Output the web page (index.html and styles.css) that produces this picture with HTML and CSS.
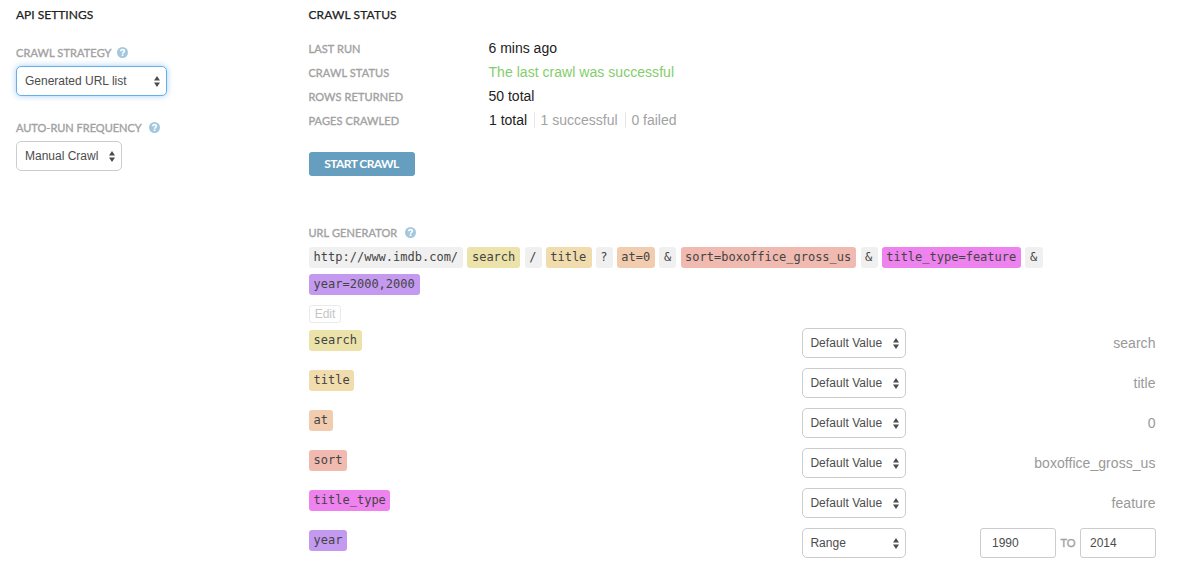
FILE: index.html
```html
<!DOCTYPE html>
<html lang="en">
<head>
<meta charset="utf-8">
<title>API Settings</title>
<link rel="stylesheet" href="styles.css">
</head>
<body>
<svg class="defs" aria-hidden="true">
  <symbol id="help" viewBox="0 0 11 11"><circle cx="5.5" cy="5.5" r="5.5" fill="#a3c8dd"/><path d="M3.5 4.3C3.7 2 7.4 2.1 7.4 4.1C7.4 5.4 5.6 5.2 5.6 6.7" fill="none" stroke="#fff" stroke-width="1.6"/><rect x="4.7" y="7.4" width="1.7" height="1.6" fill="#fff"/></symbol>
  <symbol id="arrows" viewBox="0 0 6 11"><path d="M3 0L6 4.6H0ZM3 11L0 6.4H6Z" fill="#4c4c4c"/></symbol>
</svg>
<main class="page">
  <section class="settings">
    <h2 class="title">API SETTINGS</h2>
    <div class="field field-strategy">
      <div class="label"><span>CRAWL STRATEGY</span><svg class="help"><use href="#help"/></svg></div>
      <div class="select select-focus"><span>Generated URL list</span><svg class="arrows"><use href="#arrows"/></svg></div>
    </div>
    <div class="field field-frequency">
      <div class="label"><span>AUTO-RUN FREQUENCY</span><svg class="help"><use href="#help"/></svg></div>
      <div class="select select-manual"><span>Manual Crawl</span><svg class="arrows"><use href="#arrows"/></svg></div>
    </div>
  </section>
  <section class="crawl">
    <h2 class="title">CRAWL STATUS</h2>
    <dl class="status">
      <dt class="label">LAST RUN</dt><dd>6 mins ago</dd>
      <dt class="label">CRAWL STATUS</dt><dd class="ok">The last crawl was successful</dd>
      <dt class="label">ROWS RETURNED</dt><dd>50 total</dd>
      <dt class="label">PAGES CRAWLED</dt><dd class="counts"><span>1 total</span><span class="part">1 successful</span><span class="part part-last">0 failed</span></dd>
    </dl>
    <button class="start">START CRAWL</button>
    <div class="label generator"><span>URL GENERATOR</span><svg class="help"><use href="#help"/></svg></div>
    <div class="url">
      <code class="chip">http://www.imdb.com/</code><code class="chip c-search">search</code><code class="chip">/</code><code class="chip c-title">title</code><code class="chip">?</code><code class="chip c-at">at=0</code><code class="chip">&amp;</code><code class="chip c-sort">sort=boxoffice_gross_us</code><code class="chip">&amp;</code><code class="chip c-type">title_type=feature</code><code class="chip">&amp;</code><code class="chip c-year">year=2000,2000</code>
    </div>
    <button class="edit">Edit</button>
    <div class="params">
      <div class="row"><code class="chip c-search">search</code><div class="select"><span>Default Value</span><svg class="arrows"><use href="#arrows"/></svg></div><div class="value">search</div></div>
      <div class="row"><code class="chip c-title">title</code><div class="select"><span>Default Value</span><svg class="arrows"><use href="#arrows"/></svg></div><div class="value">title</div></div>
      <div class="row"><code class="chip c-at">at</code><div class="select"><span>Default Value</span><svg class="arrows"><use href="#arrows"/></svg></div><div class="value">0</div></div>
      <div class="row"><code class="chip c-sort">sort</code><div class="select"><span>Default Value</span><svg class="arrows"><use href="#arrows"/></svg></div><div class="value">boxoffice_gross_us</div></div>
      <div class="row"><code class="chip c-type">title_type</code><div class="select"><span>Default Value</span><svg class="arrows"><use href="#arrows"/></svg></div><div class="value">feature</div></div>
      <div class="row"><code class="chip c-year">year</code><div class="select"><span>Range</span><svg class="arrows"><use href="#arrows"/></svg></div><div class="range"><div class="input">1990</div><span class="label">TO</span><div class="input input-to">2014</div></div></div>
    </div>
  </section>
</main>
</body>
</html>
```
FILE: styles.css
```css
* { box-sizing: border-box; }
body { margin: 0; background: #fff; font-family: "Liberation Sans", Arial, sans-serif; color: #222; }
.defs { display: none; }
.page { display: grid; grid-template-columns: 293px 847px; padding: 7px 0 0 16px; height: 579px; overflow: hidden; }
.title { margin: 0; font: 400 12px/16px Lato, sans-serif; color: #222; -webkit-text-stroke: 0.25px #222; letter-spacing: 0; }
.crawl .title { margin-left: -0.6px; letter-spacing: 0.12px; }
.label { font: 400 11px/16px Lato, sans-serif; color: #a2a2a2; -webkit-text-stroke: 0.35px #a2a2a2; letter-spacing: 0.1px; white-space: nowrap; }
.field .label, .generator { display: flex; align-items: center; gap: 5.5px; }
.field-strategy { margin-top: 22px; }
.field-frequency { margin-top: 24px; }
.field-frequency .label { letter-spacing: 0; gap: 7.5px; }
.help { width: 11px; height: 11px; display: block; }
.field .help, .generator .help { margin-bottom: 1px; }
.select { display: flex; align-items: center; justify-content: space-between; width: 104px; height: 30px; padding: 0 6px 0 7.4px; border: 1px solid #ccc; border-radius: 5px; font-size: 12px; letter-spacing: 0.05px; color: #4c4c4c; background: #fff; white-space: nowrap; }
.field .select { margin-top: 5px; padding-left: 8px; letter-spacing: 0; }
.select-focus { width: 151px; border-color: #66afe9; box-shadow: 0 0 6px rgba(102, 175, 233, 0.6); }
.select-manual { width: 106px; }
.arrows { width: 6px; height: 11px; display: block; }
.status { display: grid; grid-template-columns: 180px 1fr; grid-auto-rows: 24px; margin: 13px 0 0; align-items: center; }
.status .label { padding-top: 2px; margin-left: -0.6px; }
.status dd { margin: 0 0 0 -0.5px; font-size: 14px; line-height: 24px; }
.status .ok { color: #84cd6c; letter-spacing: 0.04px; }
.status .counts { display: flex; align-items: center; margin-left: 0; letter-spacing: 0; }
.part { color: #a2a2a2; border-left: 1px solid #e6e6e6; line-height: 16px; padding-left: 6px; margin-left: 6.4px; }
.part-last { padding-left: 5px; margin-left: 7.8px; }
.start { display: block; width: 106px; height: 24px; margin-top: 20px; padding: 0 1px 0 0; border: 0; border-radius: 3px; background: #659ebe; color: #fff; font: 700 12px/24px Lato, sans-serif; letter-spacing: -0.58px; }
.generator { margin-top: 49px; margin-left: -0.6px; gap: 7.6px; }
.url { display: flex; flex-wrap: wrap; gap: 6px 4.07px; width: 780px; margin-top: 6px; }
.chip { height: 21px; padding: 0 5.2px 0 4.6px; border-radius: 3px; background: #f0f0f0; color: #444; font: 12px/20px "DejaVu Sans Mono", monospace; white-space: nowrap; }
.c-search { background: #ece3aa; }
.c-title { background: #f1dcae; }
.c-at { background: #f1ccae; }
.c-sort { background: #f0bab0; }
.c-type { background: #ee82ee; }
.c-year { background: #c39af0; }
.edit { display: block; width: 32px; height: 18px; margin-top: 10px; padding: 0; border: 1px solid #ebebeb; border-radius: 3px; background: #fff; color: #c5c5c5; font: 12px/16px "Liberation Sans", Arial, sans-serif; }
.params { margin-top: 5px; display: grid; gap: 10px; }
.row { display: grid; grid-template-columns: 493px 104px 1fr; height: 30px; align-items: center; }
.row .chip { justify-self: start; align-self: start; margin-top: 2px; padding-right: 4.6px; }
.value { text-align: right; font-size: 14px; line-height: 20px; letter-spacing: 0.05px; padding-right: 0.5px; color: #999; }
.range { display: flex; align-items: center; justify-content: flex-end; }
.range .label { width: 24px; text-align: center; }
.input { width: 76px; height: 30px; border: 1px solid #ccc; border-radius: 3px; padding-left: 11px; font-size: 12px; line-height: 28px; color: #4c4c4c; }
.input-to { padding-left: 9px; }
```
